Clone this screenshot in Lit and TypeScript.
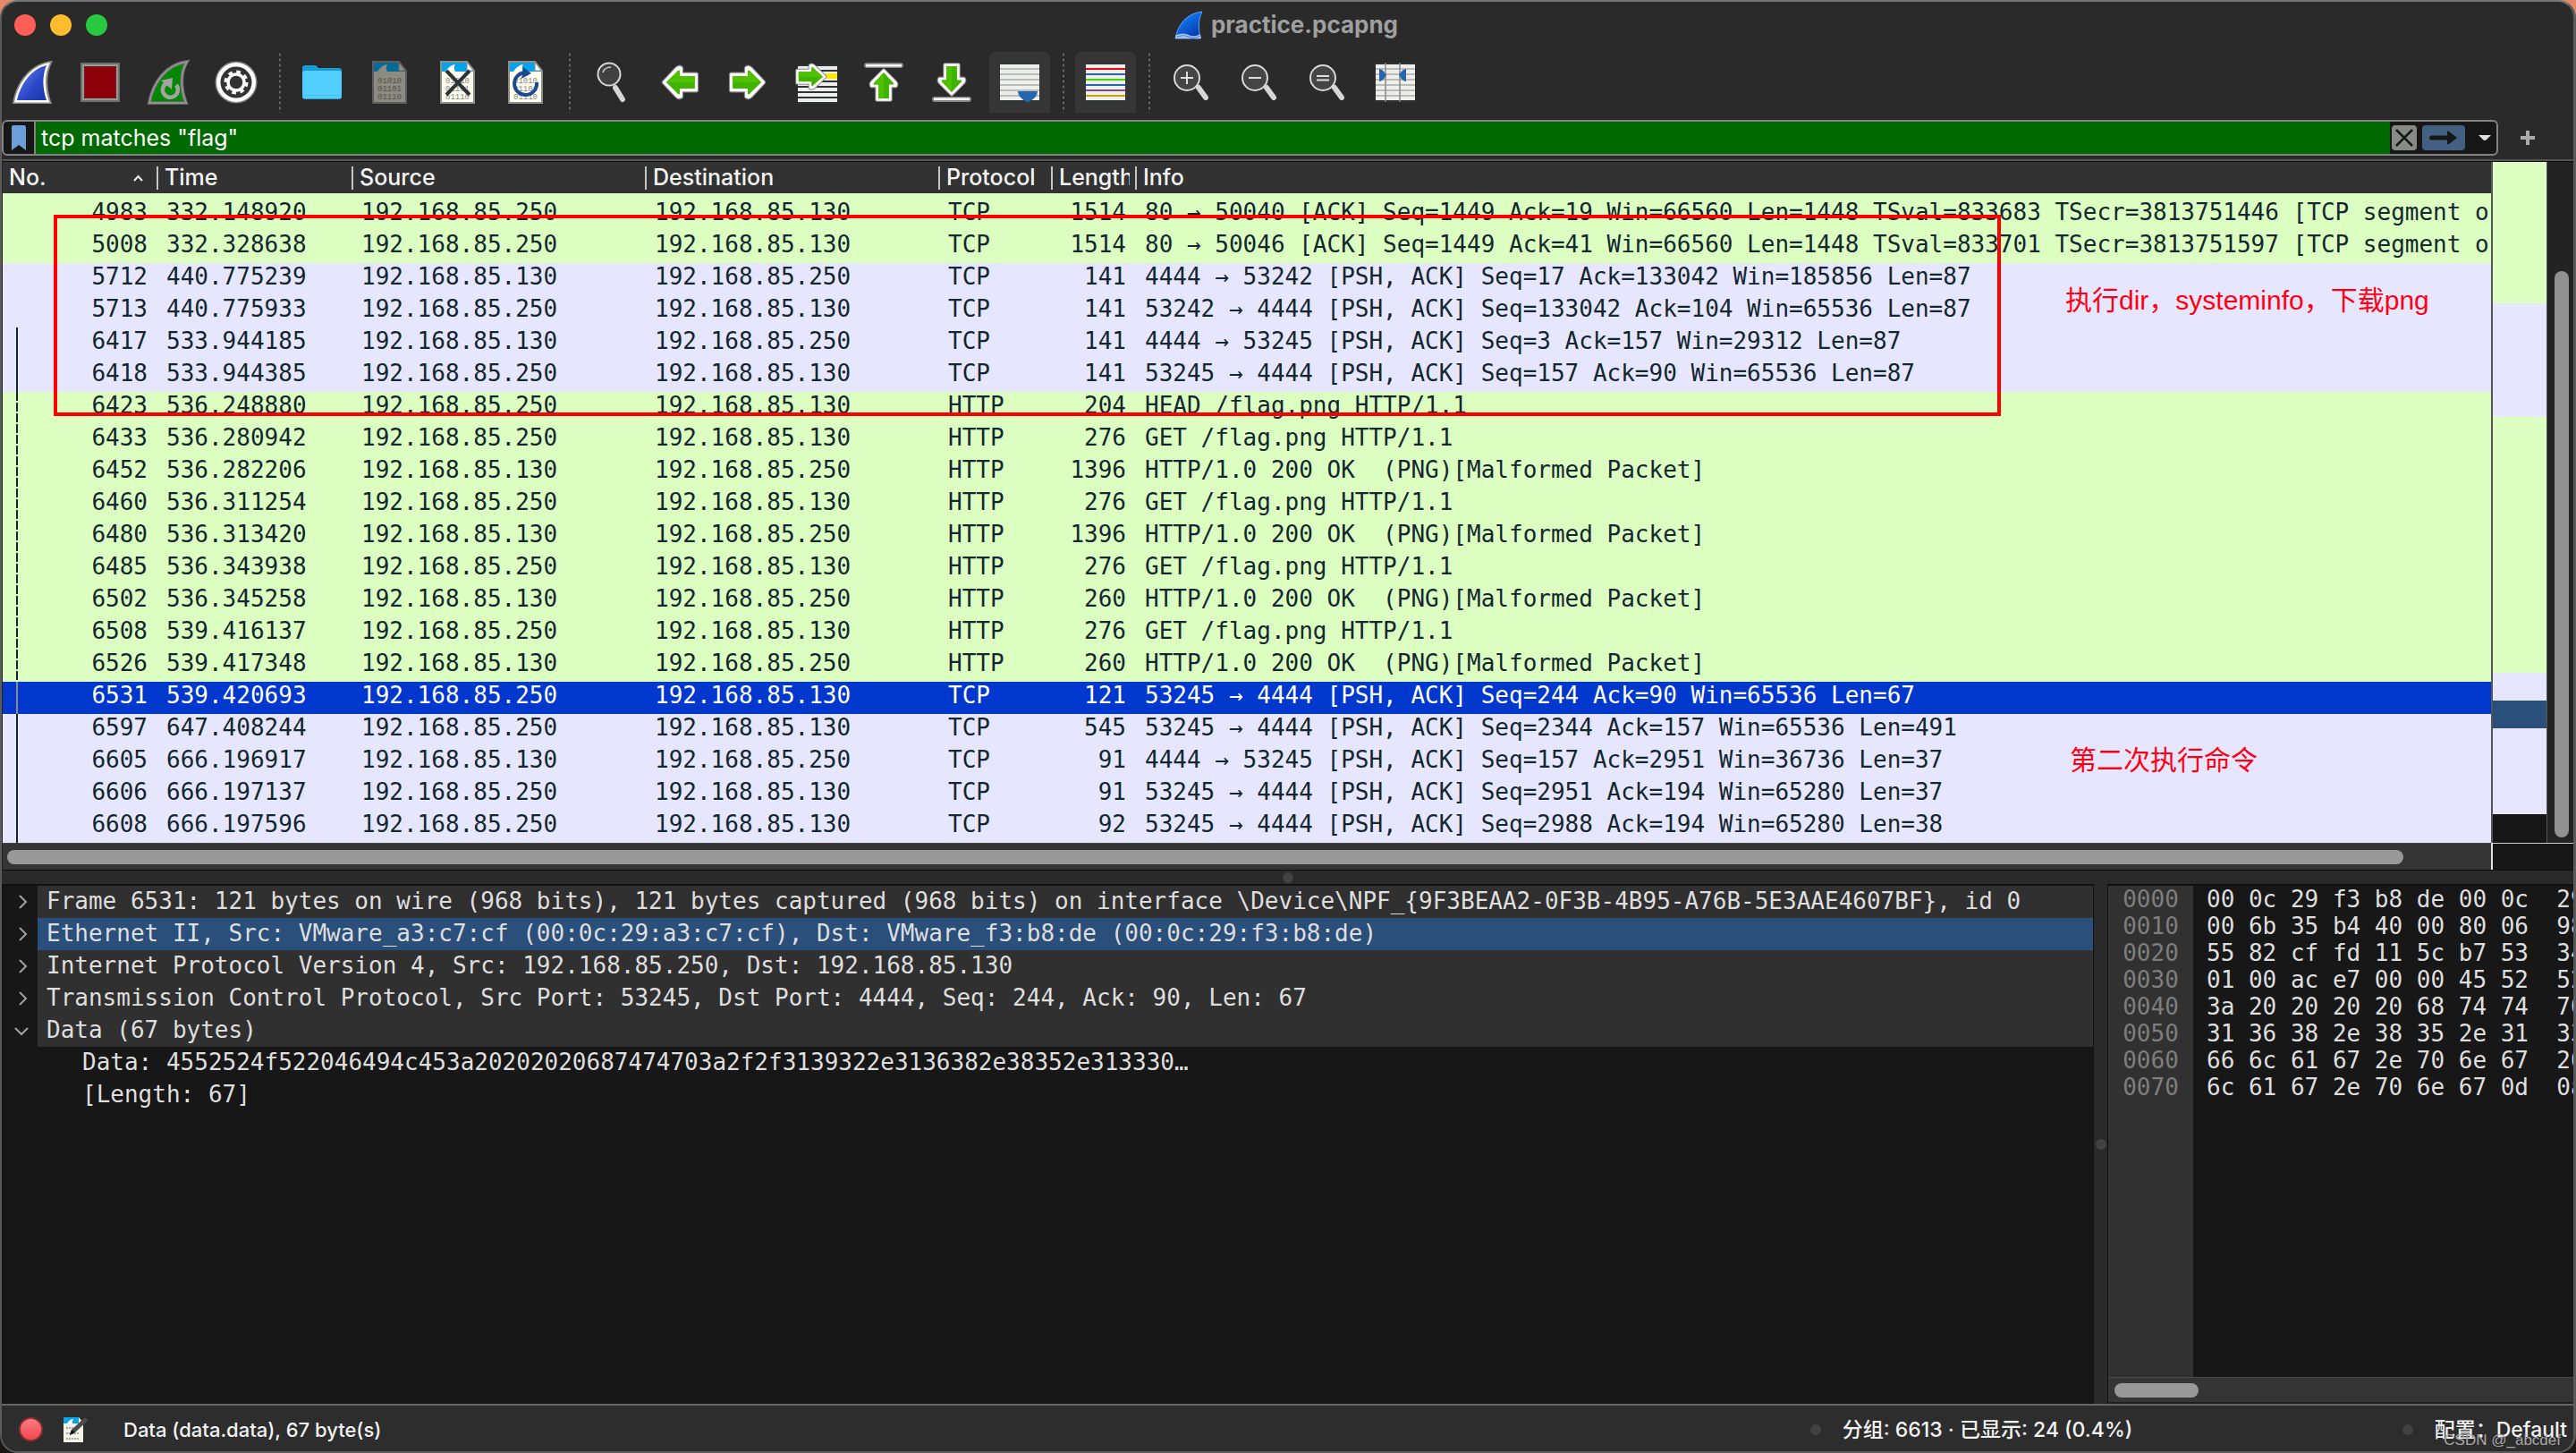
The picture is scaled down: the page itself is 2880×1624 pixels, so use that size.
import { LitElement, html, css, svg } from "lit";
import { customElement, property } from "lit/decorators.js";
import { classMap } from "lit/directives/class-map.js";

type Packet = {
  no: number;
  time: string;
  src: string;
  dst: string;
  proto: string;
  len: number;
  info: string;
  tone: "http" | "tcp" | "selected";
  link?: "solid" | "dashed";
};

const A = "192.168.85.250";
const B = "192.168.85.130";

const packets: Packet[] = [
  { no: 4983, time: "332.148920", src: A, dst: B, proto: "TCP", len: 1514, info: "80 → 50040 [ACK] Seq=1449 Ack=19 Win=66560 Len=1448 TSval=833683 TSecr=3813751446 [TCP segment of", tone: "http" },
  { no: 5008, time: "332.328638", src: A, dst: B, proto: "TCP", len: 1514, info: "80 → 50046 [ACK] Seq=1449 Ack=41 Win=66560 Len=1448 TSval=833701 TSecr=3813751597 [TCP segment of", tone: "http" },
  { no: 5712, time: "440.775239", src: B, dst: A, proto: "TCP", len: 141, info: "4444 → 53242 [PSH, ACK] Seq=17 Ack=133042 Win=185856 Len=87", tone: "tcp" },
  { no: 5713, time: "440.775933", src: A, dst: B, proto: "TCP", len: 141, info: "53242 → 4444 [PSH, ACK] Seq=133042 Ack=104 Win=65536 Len=87", tone: "tcp" },
  { no: 6417, time: "533.944185", src: B, dst: A, proto: "TCP", len: 141, info: "4444 → 53245 [PSH, ACK] Seq=3 Ack=157 Win=29312 Len=87", tone: "tcp", link: "solid" },
  { no: 6418, time: "533.944385", src: A, dst: B, proto: "TCP", len: 141, info: "53245 → 4444 [PSH, ACK] Seq=157 Ack=90 Win=65536 Len=87", tone: "tcp", link: "solid" },
  { no: 6423, time: "536.248880", src: A, dst: B, proto: "HTTP", len: 204, info: "HEAD /flag.png HTTP/1.1", tone: "http", link: "dashed" },
  { no: 6433, time: "536.280942", src: A, dst: B, proto: "HTTP", len: 276, info: "GET /flag.png HTTP/1.1", tone: "http", link: "dashed" },
  { no: 6452, time: "536.282206", src: B, dst: A, proto: "HTTP", len: 1396, info: "HTTP/1.0 200 OK  (PNG)[Malformed Packet]", tone: "http", link: "dashed" },
  { no: 6460, time: "536.311254", src: A, dst: B, proto: "HTTP", len: 276, info: "GET /flag.png HTTP/1.1", tone: "http", link: "dashed" },
  { no: 6480, time: "536.313420", src: B, dst: A, proto: "HTTP", len: 1396, info: "HTTP/1.0 200 OK  (PNG)[Malformed Packet]", tone: "http", link: "dashed" },
  { no: 6485, time: "536.343938", src: A, dst: B, proto: "HTTP", len: 276, info: "GET /flag.png HTTP/1.1", tone: "http", link: "dashed" },
  { no: 6502, time: "536.345258", src: B, dst: A, proto: "HTTP", len: 260, info: "HTTP/1.0 200 OK  (PNG)[Malformed Packet]", tone: "http", link: "dashed" },
  { no: 6508, time: "539.416137", src: A, dst: B, proto: "HTTP", len: 276, info: "GET /flag.png HTTP/1.1", tone: "http", link: "dashed" },
  { no: 6526, time: "539.417348", src: B, dst: A, proto: "HTTP", len: 260, info: "HTTP/1.0 200 OK  (PNG)[Malformed Packet]", tone: "http", link: "dashed" },
  { no: 6531, time: "539.420693", src: A, dst: B, proto: "TCP", len: 121, info: "53245 → 4444 [PSH, ACK] Seq=244 Ack=90 Win=65536 Len=67", tone: "selected", link: "solid" },
  { no: 6597, time: "647.408244", src: A, dst: B, proto: "TCP", len: 545, info: "53245 → 4444 [PSH, ACK] Seq=2344 Ack=157 Win=65536 Len=491", tone: "tcp", link: "solid" },
  { no: 6605, time: "666.196917", src: B, dst: A, proto: "TCP", len: 91, info: "4444 → 53245 [PSH, ACK] Seq=157 Ack=2951 Win=36736 Len=37", tone: "tcp", link: "solid" },
  { no: 6606, time: "666.197137", src: A, dst: B, proto: "TCP", len: 91, info: "53245 → 4444 [PSH, ACK] Seq=2951 Ack=194 Win=65280 Len=37", tone: "tcp", link: "solid" },
  { no: 6608, time: "666.197596", src: A, dst: B, proto: "TCP", len: 92, info: "53245 → 4444 [PSH, ACK] Seq=2988 Ack=194 Win=65280 Len=38", tone: "tcp", link: "solid" },
];

const minimap = [
  { tone: "http", size: 158 },
  { tone: "tcp", size: 127 },
  { tone: "http", size: 285 },
  { tone: "tcp", size: 31 },
  { tone: "current", size: 31 },
  { tone: "tcp", size: 96 },
  { tone: "none", size: 32 },
];

const protocolRows = [
  { text: "Frame 6531: 121 bytes on wire (968 bits), 121 bytes captured (968 bits) on interface \\Device\\NPF_{9F3BEAA2-0F3B-4B95-A76B-5E3AAE4607BF}, id 0" },
  { text: "Ethernet II, Src: VMware_a3:c7:cf (00:0c:29:a3:c7:cf), Dst: VMware_f3:b8:de (00:0c:29:f3:b8:de)", active: true },
  { text: "Internet Protocol Version 4, Src: 192.168.85.250, Dst: 192.168.85.130" },
  { text: "Transmission Control Protocol, Src Port: 53245, Dst Port: 4444, Seq: 244, Ack: 90, Len: 67" },
  { text: "Data (67 bytes)", open: true },
];

const dataFields = [
  "Data: 4552524f522046494c453a20202020687474703a2f2f3139322e3136382e38352e313330…",
  "[Length: 67]",
];

const hexRows = [
  ["0000", "00 0c 29 f3 b8 de 00 0c  29"],
  ["0010", "00 6b 35 b4 40 00 80 06  98"],
  ["0020", "55 82 cf fd 11 5c b7 53  34"],
  ["0030", "01 00 ac e7 00 00 45 52  52"],
  ["0040", "3a 20 20 20 20 68 74 74  70"],
  ["0050", "31 36 38 2e 38 35 2e 31  33"],
  ["0060", "66 6c 61 67 2e 70 6e 67  20"],
  ["0070", "6c 61 67 2e 70 6e 67 0d  0a"],
];

const ARROW_RIGHT = "M4 15 H22 V8 Q25 6 28 9 L43 24 L28 39 Q25 42 22 40 V33 H4 Z";

const greenArrow = (transform: string) => svg`
  <g transform=${transform} stroke-linejoin="round">
    <path d=${ARROW_RIGHT} fill="#888" stroke="#858585" stroke-width="5" />
    <path d=${ARROW_RIGHT} fill="#fff" stroke="#fff" stroke-width="2.5" />
    <path d="M6 17 H24 V11 Q26 10 27 12 L40 24 L27 36 Q26 38 24 37 V31 H6 Z" fill="#3fb400" />
    <path d="M6 17 H24 V11 Q26 10 27 12 L40 24 H6 Z" fill="#4fc000" />
  </g>`;

const captureDoc = (dim = false) => svg`
  <path d="M5 1 H34 L42 11 V47 H5 Z" fill=${dim ? "#8b8b80" : "#fffff0"} />
  <path d="M5 1 H34 V11 H42 V12 H5 Z" fill=${dim ? "#096a94" : "#06a3e8"} />
  <path d="M10 12 C13 7 18 4 21 4 C19 7 20 10 21 12 Z" fill=${dim ? "#8d8d88" : "#fff"} />
  <path d="M34 1 V11 H42 Z" fill=${dim ? "#8f8f88" : "#fff"} stroke=${dim ? "#666" : "#888"} stroke-width="1" />
  <g font-family="Liberation Mono, monospace" font-size="9" fill=${dim ? "#555" : "#888"} text-anchor="middle">
    <text x="23.5" y="24.500">01010</text>
    <text x="23.5" y="33.500">01101</text>
    <text x="23.5" y="42.500">01110</text>
  </g>
  <path d="M5 1 H34 L42 11 V47 H5 Z" fill="none" stroke=${dim ? "#5d5d5d" : "#8e8e88"} stroke-width="2" />`;

const listLines = (colors: string[]) => svg`
  <rect x="2" y="2" width="44" height="44" fill="#2e3436" />
  <rect x="2" y="4" width="44" height="40" fill="#eeeeec" />
  ${colors.map((c, i) => svg`<rect x="2" y=${8 + i * 6} width="44" height="2" fill=${c} />`)}`;

const lens = (sign: string) => svg`
  <path d="M32 30 L40 41" stroke="#d6d6d6" stroke-width="6" stroke-linecap="round" />
  <circle cx="19" cy="19" r="14" fill="#454545" stroke="#d8d8d8" stroke-width="2" />
  <path d=${sign} stroke="#dedede" stroke-width="2" fill="none" />`;

const FIN = "M3 47 C7 24 22 4 45 1 C37 14 38 32 44 47 Z";
const grey = Array(6).fill("#babdb6");

const finDefs = svg`
  <defs>
    <linearGradient id="fin" x1="0" y1="0" x2="1" y2="1">
      <stop offset="0" stop-color="#6b84ee" />
      <stop offset=".6" stop-color="#2b47c8" />
      <stop offset="1" stop-color="#1c35a8" />
    </linearGradient>
  </defs>`;

const icons: Record<string, unknown> = {
  start: svg`${finDefs}
    <path d="M2 48 C6 23 22 2 47 0 C39 14 40 32 46 48 Z" fill="#8b8b8b" />
    <path d="M4 46.500 C8 24 23 5 44 2 C37 15 38 33 43.500 46.500 Z" fill="#fff" />
    <path d="M7 44 C11 26 23 9 40 5 C34.500 18 36 32 40 44 Z" fill="url(#fin)" />`,
  stop: svg`
    <rect x="2" y="2" width="44" height="44" fill="#6e6e6e" />
    <rect x="4" y="4" width="40" height="40" fill="#999" />
    <rect x="6" y="6" width="36" height="36" fill="#6b2020" />
    <rect x="7" y="7" width="34" height="34" fill="#8e0009" />`,
  restart: svg`
    <path d=${FIN} fill="#008900" stroke="#666" stroke-width="4" />
    <path d=${FIN} fill="none" stroke="#929292" stroke-width="2" />
    <path d="M33 27 A8.500 8.500 0 1 1 22 25" fill="none" stroke="#a3a3a3" stroke-width="4.500" />
    <path d="M16 22 L29 19 L28 32 Z" fill="#a3a3a3" />`,
  options: svg`
    <circle cx="24" cy="24" r="23.500" fill="#888" />
    <circle cx="24" cy="24" r="22" fill="#fff" />
    <circle cx="24" cy="24" r="17.500" fill="#333" />
    <circle cx="24" cy="24" r="9" fill="none" stroke="#fff" stroke-width="3.500" />
    <circle cx="24" cy="24" r="11.500" fill="none" stroke="#fff" stroke-width="4" stroke-dasharray="4.500 4.531" />`,
  open: svg`
    <path d="M2 8 Q2 5 5 5 H16 Q18 5 20 8 H43 Q46 8 46 11 V20 H2 Z" fill="#1a9bd6" />
    <rect x="2" y="11" width="44" height="32" rx="3" fill="#2f9fd0" />
    <rect x="2" y="11" width="44" height="31" rx="3" fill="#52cfff" />
    <rect x="2" y="38" width="44" height="1" fill="#45bdec" />`,
  save: captureDoc(true),
  close: svg`${captureDoc()}
    <path d="M11 11 L37 38 M37 11 L11 38" stroke="#2e3436" stroke-width="4" />`,
  reload: svg`${captureDoc()}
    <path d="M24 13 A12.500 12.500 0 1 0 36 24" fill="none" stroke="#1b4a8e" stroke-width="4" />
    <path d="M21 7 L30 14 L19 20 Z" fill="#1b4a8e" />`,
  find: svg`
    <path d="M28 30 L36 43" stroke="#d6d6d6" stroke-width="6" stroke-linecap="round" />
    <circle cx="21" cy="15" r="12.500" fill="#414141" stroke="#d8d8d8" stroke-width="2" />
    <path d="M14 13 Q16 7 23 7" fill="none" stroke="#d0d0d0" stroke-width="1.500" />`,
  back: greenArrow("matrix(-.94 0 0 1 46.500 0)"),
  forward: greenArrow("matrix(.94 0 0 1 1.500 0)"),
  goto: svg`
    <rect x="4" y="4" width="44" height="44" fill="#2e3436" />
    ${[6, 12, 18, 24, 30, 36, 42].map((y) => svg`<rect x="4" y=${y} width="44" height="4" fill="#eeeeec" />`)}
    <rect x="34" y="14" width="14" height="6" fill="#fce800" />
    ${greenArrow("translate(0 -1) scale(.8 .78)")}`,
  first: svg`
    <rect x="2" y="2" width="44" height="6" rx="3" fill="#858585" />
    <rect x="4" y="4" width="40" height="2.500" fill="#fff" />
    ${greenArrow("matrix(0 -.85 .85 0 3.600 47)")}`,
  last: svg`
    <rect x="2" y="40" width="44" height="6" rx="3" fill="#858585" />
    <rect x="4" y="41.500" width="40" height="2.500" fill="#fff" />
    ${greenArrow("matrix(0 .85 .85 0 3.600 1)")}`,
  autoscroll: svg`${listLines(grey)}
    <path d="M22 34 H44 Q44 40 36 45 Q33 47 30 45 Q22 40 22 34 Z" fill="#2765ae" />`,
  colorize: listLines(["#fb0007", "#2765ae", "#40d800", "#2765ae", "#75507b", "#c9a000"]),
  zoomin: lens("M12 19 H26 M19 12 V26"),
  zoomout: lens("M12 19 H26"),
  zoomreset: lens("M12 17 H26 M12 21.500 H26"),
  columns: svg`${listLines(grey)}
    <path d="M13 2 V46 M29 2 V46" stroke="#888a85" stroke-width="1.500" />
    <path d="M6 9 Q10 9 14 16 Q10 23 6 23 Z M36 9 Q32 9 28 16 Q32 23 36 23 Z" fill="#2765ae" />`,
};

@customElement("tool-icon")
class ToolIcon extends LitElement {
  @property() name = "";
  static styles = css`
    :host { display: block; width: 48px; height: 48px; }
    svg { display: block; width: 48px; height: 48px; overflow: visible; }
  `;
  render() {
    return html`<svg viewBox="0 0 48 48" aria-hidden="true">${icons[this.name]}</svg>`;
  }
}

const tools: { id: string; label: string; on?: boolean }[][] = [
  [
    { id: "start", label: "Start capture" },
    { id: "stop", label: "Stop capture" },
    { id: "restart", label: "Restart capture" },
    { id: "options", label: "Capture options" },
  ],
  [
    { id: "open", label: "Open file" },
    { id: "save", label: "Save file" },
    { id: "close", label: "Close file" },
    { id: "reload", label: "Reload file" },
  ],
  [
    { id: "find", label: "Find packet" },
    { id: "back", label: "Previous packet" },
    { id: "forward", label: "Next packet" },
    { id: "goto", label: "Go to packet" },
    { id: "first", label: "First packet" },
    { id: "last", label: "Last packet" },
    { id: "autoscroll", label: "Auto scroll", on: true },
  ],
  [{ id: "colorize", label: "Colorize", on: true }],
  [
    { id: "zoomin", label: "Zoom in" },
    { id: "zoomout", label: "Zoom out" },
    { id: "zoomreset", label: "Normal size" },
    { id: "columns", label: "Resize columns" },
  ],
];

@customElement("packet-list")
class PacketList extends LitElement {
  static styles = css`
    :host { display: block; position: relative; overflow: hidden; }
    table { width: 100%; table-layout: fixed; border-collapse: separate; border-spacing: 0; }
    .c-no { width: 172px; }
    .c-time { width: 218px; }
    .c-addr { width: 328px; }
    .c-proto { width: 126px; }
    .c-len { width: 94px; }
    thead tr { height: 35px; background: #323232; }
    th {
      padding: 0; text-align: left;
      font: 500 25px/24px Inter, "Liberation Sans", sans-serif; color: #f4f4f4;
    }
    .head { display: flex; justify-content: space-between; align-items: flex-start; height: 26px; padding-left: 7px; border-left: 2px solid #c4c4c4; white-space: nowrap; }
    th:first-child .head { border-left: 0; padding-right: 14px; }
    th.clip .head { margin-right: 6px; overflow-x: clip; }
    .head svg { width: 13px; height: 8px; align-self: center; }
    td {
      height: 36px; padding: 0 10px 6px 11px; overflow: hidden; white-space: pre; box-sizing: border-box;
      font: 26px/30px "DejaVu Sans Mono", "Liberation Mono", monospace;
    }
    td:last-child { padding-right: 0; }
    tbody tr:first-child td { padding-top: 6px; height: 42px; }
    .num { text-align: right; }
    .http { background: #dcfec1; color: #12272e; }
    .tcp { background: #e7e6ff; color: #12272e; }
    .selected { background: #0037cc; color: #fff; }
    td:first-child { background-repeat: repeat-y; background-position: 15px 0; background-size: 2px 12px; }
    .solid td:first-child { background-image: linear-gradient(#12272e, #12272e); }
    .dashed td:first-child { background-image: linear-gradient(#12272e 10px, transparent 10px); }
    .selected td:first-child { background-image: linear-gradient(#8c8c8c, #8c8c8c); }
    .box { position: absolute; left: 57px; top: 59px; width: 2169px; height: 217px; border: 4px solid #fe0000; }
    .note {
      position: absolute; color: #fe0012; white-space: nowrap;
      font: 30px/40px "Liberation Sans", "Noto Sans CJK SC", sans-serif;
    }
    .note-a { left: 2306px; top: 135px; }
    .note-b { left: 2311px; top: 649px; }
  `;
  render() {
    return html`
      <table>
        <colgroup>
          <col class="c-no" /><col class="c-time" /><col class="c-addr" /><col class="c-addr" /><col class="c-proto" /><col class="c-len" /><col />
        </colgroup>
        <thead>
          <tr>
            <th scope="col"><div class="head">No.<svg viewBox="0 0 13 8" aria-hidden="true"><path d="M2 7 L6.500 2 L11 7" fill="none" stroke="#eee" stroke-width="2" /></svg></div></th>
            <th scope="col"><div class="head">Time</div></th>
            <th scope="col"><div class="head">Source</div></th>
            <th scope="col"><div class="head">Destination</div></th>
            <th scope="col"><div class="head">Protocol</div></th>
            <th scope="col" class="clip"><div class="head">Length</div></th>
            <th scope="col"><div class="head">Info</div></th>
          </tr>
        </thead>
        <tbody>
          ${packets.map((p) => html`
            <tr class=${classMap({ [p.tone]: true, [p.link ?? "plain"]: true })}>
              <td class="num">${p.no}</td><td>${p.time}</td><td>${p.src}</td><td>${p.dst}</td><td>${p.proto}</td><td class="num">${p.len}</td><td>${p.info}</td>
            </tr>`)}
        </tbody>
      </table>
      <div class="box"></div>
      <div class="note note-a" lang="zh-CN">执行dir，systeminfo，下载png</div>
      <div class="note note-b" lang="zh-CN">第二次执行命令</div>
    `;
  }
}

@customElement("packet-details")
class PacketDetails extends LitElement {
  static styles = css`
    :host { display: block; background: #171717; overflow: hidden; border-top: 2px solid #111; }
    .row { display: flex; height: 36px; font: 26px/34px "DejaVu Sans Mono", "Liberation Mono", monospace; color: #dedede; white-space: pre; }
    .toggle { display: flex; align-items: center; justify-content: center; width: 39px; height: 36px; padding: 0; padding-left: 3px; border: 0; background: none; flex: none; }
    .toggle svg { width: 18px; height: 18px; }
    .text { flex: 1; min-width: 0; padding-left: 10px; background: #303030; overflow: hidden; }
    .active .text { background: #2a4f7a; }
    .field { padding-left: 89px; }
  `;
  render() {
    return html`
      ${protocolRows.map((r) => html`
        <div class=${classMap({ row: true, active: !!r.active })}>
          <button class="toggle" aria-label=${r.open ? "Collapse" : "Expand"}>
            <svg viewBox="0 0 18 18" aria-hidden="true"><path d=${r.open ? "M2 6 L9 13 L16 6" : "M7 2 L14 9 L7 16"} fill="none" stroke="#a2a2a2" stroke-width="2" /></svg>
          </button>
          <div class="text">${r.text}</div>
        </div>`)}
      ${dataFields.map((f) => html`<div class="row field">${f}</div>`)}
    `;
  }
}

@customElement("packet-bytes")
class PacketBytes extends LitElement {
  static styles = css`
    :host { display: flex; flex-direction: column; background: #171717; overflow: hidden; border: 2px solid #111; border-right: 0; border-left-width: 1px; border-bottom-color: #202020; }
    .dump { flex: 1; display: flex; font: 26px/30px "DejaVu Sans Mono", "Liberation Mono", monospace; white-space: pre; }
    .offsets { width: 95px; flex: none; background: #313131; color: #7e7e7e; text-align: center; }
    .bytes { flex: 1; min-width: 0; padding-left: 15px; color: #dedede; overflow: hidden; }
    .scroll { height: 28px; flex: none; background: #353535; border-top: 1px solid #4a4a4a; padding: 6px 7px; box-sizing: border-box; }
    .thumb { width: 94px; height: 16px; border-radius: 8px; background: #999; }
  `;
  render() {
    return html`
      <div class="dump">
        <div class="offsets">${hexRows.map((r) => html`<div>${r[0]}</div>`)}</div>
        <div class="bytes">${hexRows.map((r) => html`<div>${r[1]}</div>`)}</div>
      </div>
      <div class="scroll"><div class="thumb"></div></div>
    `;
  }
}

@customElement("app-root")
class AppRoot extends LitElement {
  static styles = css`
    :host { display: block; background: linear-gradient(#e58a68 20%, #1b1614 80%); font-family: Inter, "Liberation Sans", "Noto Sans CJK SC", sans-serif; }
    * { box-sizing: border-box; }
    button { margin: 0; padding: 0; border: 0; background: none; font: inherit; color: inherit; }
    .window { display: flex; flex-direction: column; min-height: 100vh; background: #2a2a2a; border: 2px solid #5a5a5a; border-top-color: #757575; border-right-width: 3px; border-radius: 20px; overflow: hidden; }
    .title { display: grid; grid-template-columns: 1fr auto 1fr; align-items: center; height: 52px; padding: 0 17px 0 14px; }
    .lights { display: flex; gap: 16px; }
    .light { width: 24px; height: 24px; border-radius: 50%; }
    .red { background: #ff5f57; }
    .yellow { background: #febc2e; }
    .green { background: #28c840; }
    .name { display: flex; align-items: center; gap: 9px; margin: 0; font-size: 26px; line-height: 32px; font-weight: 700; color: #9f9f9f; }
    .name svg { width: 32px; height: 32px; }
    .tools { display: flex; align-items: center; height: 76px; }
    .group { display: flex; gap: 8px; }
    .group + .group { margin-left: 14px; padding-left: 14px; background: radial-gradient(circle at 1px 3px, #666 1px, transparent 2px) 0 0 / 2px 6px repeat-y; }
    .tool { display: flex; align-items: center; justify-content: center; width: 68px; height: 68px; }
    .tool.on { background: #363636; border-radius: 8px 8px 0 0; }
    .filter { display: flex; align-items: center; padding: 4px 43px 4px 0; gap: 25px; }
    .field { flex: 1; display: flex; align-items: center; height: 40px; border: 2px solid #828282; border-radius: 6px; background: #171717; overflow: hidden; }
    .mark { width: 36px; height: 36px; flex: none; border-right: 2px solid #828282; display: flex; align-items: center; justify-content: center; }
    .mark svg { width: 16px; height: 28px; }
    .field input { flex: 1; min-width: 0; height: 36px; border: 0; outline: 0; padding: 0 6px; background: #006900; color: #fff; font: 25px/36px Inter, "Liberation Sans", sans-serif; }
    .clear { width: 28px; height: 28px; margin-left: 2px; border-radius: 4px; background: #888a85; }
    .apply { width: 48px; height: 28px; margin-left: 6px; border-radius: 4px; background: #436082; }
    .recent { width: 26px; height: 28px; display: flex; align-items: center; justify-content: center; margin-left: 9px; }
    .clear svg, .apply svg, .recent svg, .plus svg { display: block; margin: auto; }
    .plus { width: 16px; height: 16px; }
    .capture { display: grid; grid-template-columns: minmax(0, 1fr) 92px; border-top: 2px solid #555; box-shadow: inset 0 1px #0d0d0d; padding-top: 1px; border-left: 1px solid #222; }
    .side { display: flex; border-left: 2px solid #555; background: #232323; }
    .map { display: flex; flex-direction: column; width: 61px; border-right: 1px solid #555; }
    .http { background: #dcfec1; }
    .tcp { background: #e7e6ff; }
    .current { background: #2a4f7a; }
    .none { background: #171717; }
    .vtrack { flex: 1; padding: 122px 0 6px 8px; }
    .vthumb { width: 16px; height: 100%; border-radius: 8px; background: #919191; }
    .htrack { height: 30px; padding: 7px 98px 6px 5px; background: #353535; border-top: 1px solid #484848; }
    .hthumb { height: 16px; border-radius: 8px; background: #999; }
    .corner { background: #171717; border-left: 2px solid #e4e4e4; border-top: 1px solid #ccc; }
    .split { height: 16px; display: flex; align-items: center; justify-content: center; border-top: 1px solid #0f0f0f; }
    .grip { width: 12px; height: 12px; border-radius: 50%; background: #424242; }
    .lower { flex: 1; display: grid; grid-template-columns: minmax(0, 2337fr) 16px minmax(0, 521fr); border-left: 1px solid #111; }
    .vsplit { display: flex; align-items: center; justify-content: center; border-left: 1px solid #111; }
    .status { display: flex; align-items: center; height: 53px; border-top: 2px solid #666; padding: 2px 7px 0 19px; background: #2d2d2d; color: #f2f2f2; font-size: 23px; line-height: 32px; position: relative; font-weight: 500; }
    .expert { width: 27px; height: 27px; border-radius: 50%; border: 2px solid #8c2f35; background: linear-gradient(#f97a80, #f7474f); }
    .comment { width: 28px; height: 28px; margin-left: 23px; }
    .comment svg { display: block; width: 28px; height: 28px; }
    .msg { flex: 1; margin-left: 39px; font-size: 22px; }
    .stat { display: flex; align-items: center; gap: 24px; }
    .counts { width: 662px; }
    .watermark { position: absolute; right: 14px; bottom: 2px; font: 17px/20px "Liberation Sans", sans-serif; color: #a6a6a6; }
  `;
  render() {
    return html`
      <div class="window">
        <header class="title">
          <div class="lights"><span class="light red"></span><span class="light yellow"></span><span class="light green"></span></div>
          <h1 class="name">
            <svg viewBox="0 0 32 32" aria-hidden="true">
              <defs><linearGradient id="f" x1="0" y1="0" x2=".7" y2="1"><stop offset="0" stop-color="#3aa0ff" /><stop offset=".5" stop-color="#0d63dd" /><stop offset="1" stop-color="#0638a8" /></linearGradient></defs>
              <path d="M1 31 C4 15 14 3 31 1 C26 10 27 22 29 31 Z" fill="url(#f)" stroke="#58a8f8" stroke-width="1" />
              <path d="M2 27 Q10 24 16 27 T29 26 L30 31 H1 Z" fill="#a5c2f0" />
              <path d="M3 29 Q10 26 16 29 T29 28" fill="none" stroke="#4b7ed8" stroke-width="1" />
            </svg>
            practice.pcapng
          </h1>
        </header>
        <nav class="tools" aria-label="Main toolbar">
          ${tools.map((g) => html`<div class="group">${g.map((t) => html`
            <button class=${classMap({ tool: true, on: !!t.on })} aria-label=${t.label}><tool-icon name=${t.id}></tool-icon></button>`)}</div>`)}
        </nav>
        <div class="filter">
          <div class="field">
            <button class="mark" aria-label="Bookmarks"><svg viewBox="0 0 16 28" aria-hidden="true"><path d="M0 2 Q0 0 2 0 H14 Q16 0 16 2 V28 L8 22 L0 28 Z" fill="#6c9fd8" /></svg></button>
            <input aria-label="Display filter" .value=${'tcp matches "flag"'} spellcheck="false" />
            <button class="clear" aria-label="Clear filter"><svg width="20" height="20" viewBox="0 0 20 20"><path d="M1 1 L19 19 M19 1 L1 19" stroke="#171717" stroke-width="2.500" /></svg></button>
            <button class="apply" aria-label="Apply filter"><svg width="32" height="16" viewBox="0 0 32 16"><path d="M2 5.500 H20 V1 Q20 0 22 1 L31 8 L22 15 Q20 16 20 14 V10.500 H2 Q0 10.500 0 8 Q0 5.500 2 5.500 Z" fill="#171717" /></svg></button>
            <button class="recent" aria-label="Recent filters"><svg width="14" height="8" viewBox="0 0 14 8"><path d="M0 1 H14 L9 6 Q7 8 5 6 Z" fill="#e0e0e0" /></svg></button>
          </div>
          <button class="plus" aria-label="Add filter button"><svg width="16" height="16" viewBox="0 0 16 16"><path d="M6 0 H10 V6 H16 V10 H10 V16 H6 V10 H0 V6 H6 Z" fill="#aaa" /></svg></button>
        </div>
        <main class="capture">
          <packet-list></packet-list>
          <div class="side">
            <div class="map">${minimap.map((m) => html`<div class=${m.tone} style="flex:${m.size}"></div>`)}</div>
            <div class="vtrack"><div class="vthumb"></div></div>
          </div>
          <div class="htrack"><div class="hthumb"></div></div>
          <div class="corner"></div>
        </main>
        <div class="split"><span class="grip"></span></div>
        <section class="lower">
          <packet-details></packet-details>
          <div class="vsplit"><span class="grip"></span></div>
          <packet-bytes></packet-bytes>
        </section>
        <footer class="status" lang="zh-CN">
          <button class="expert" aria-label="Expert information"></button>
          <button class="comment" aria-label="Capture file comment">
            <svg viewBox="0 0 28 28" aria-hidden="true">
              <path d="M0 0 H17 L22 6 V28 H0 Z" fill="#f3f3e8" /><path d="M0 0 H17 V7 H0 Z" fill="#06a3e8" /><path d="M4 7 Q7 2 11 2 Q9 5 10 7 Z" fill="#fff" />
              <path d="M3 12 H15 M3 18 H18 M3 24 H18" stroke="#aaa" stroke-width="2" stroke-dasharray="2 1" />
              <path d="M7 20 L9 14 L23 1 Q26 0 27 4 L13 17 Z" fill="#4a4d4c" /><path d="M7 20 L9 14 L13 17 Z" fill="#000" />
            </svg>
          </button>
          <span class="msg">Data (data.data), 67 byte(s)</span>
          <span class="stat counts"><span class="grip"></span>分组: 6613 · 已显示: 24 (0.4%)</span>
          <span class="stat"><span class="grip"></span>配置：Default</span>
          <span class="watermark">CSDN @_abcdef</span>
        </footer>
      </div>
    `;
  }
}
